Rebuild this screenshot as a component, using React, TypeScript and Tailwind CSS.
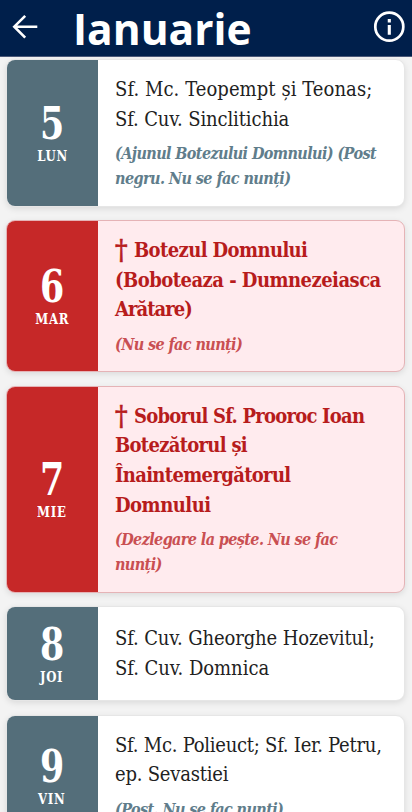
import React from "react";
import clsx from "clsx";

interface Line {
  text: string;
  // tracking keeps each line at its intended measure
  tracking: string;
  cross?: boolean;
}

interface Day {
  day: number;
  weekday: string;
  feast?: boolean;
  saints: Line[];
  notes: Line[];
}

const days: Day[] = [
  {
    day: 5,
    weekday: "LUN",
    saints: [
      { text: "Sf. Mc. Teopempt și Teonas;", tracking: "tracking-[0.07px]" },
      { text: "Sf. Cuv. Sinclitichia", tracking: "tracking-[-0.12px]" },
    ],
    notes: [
      { text: "(Ajunul Botezului Domnului) (Post", tracking: "tracking-[-0.6px]" },
      { text: "negru. Nu se fac nunți)", tracking: "tracking-[-0.56px]" },
    ],
  },
  {
    day: 6,
    weekday: "MAR",
    feast: true,
    saints: [
      { text: "Botezul Domnului", tracking: "tracking-[-0.6px]", cross: true },
      { text: "(Boboteaza - Dumnezeiasca", tracking: "tracking-[-0.52px]" },
      { text: "Arătare)", tracking: "tracking-[-0.95px]" },
    ],
    notes: [{ text: "(Nu se fac nunți)", tracking: "tracking-[-0.6px]" }],
  },
  {
    day: 7,
    weekday: "MIE",
    feast: true,
    saints: [
      { text: "Soborul Sf. Prooroc Ioan", tracking: "tracking-[-0.77px]", cross: true },
      { text: "Botezătorul și", tracking: "tracking-[-0.7px]" },
      { text: "Înaintemergătorul", tracking: "tracking-[-0.66px]" },
      { text: "Domnului", tracking: "tracking-[-0.5px]" },
    ],
    notes: [
      { text: "(Dezlegare la pește. Nu se fac", tracking: "tracking-[-0.6px]" },
      { text: "nunți)", tracking: "tracking-[-0.6px]" },
    ],
  },
  {
    day: 8,
    weekday: "JOI",
    saints: [
      { text: "Sf. Cuv. Gheorghe Hozevitul;", tracking: "tracking-[-0.12px]" },
      { text: "Sf. Cuv. Domnica", tracking: "tracking-[-0.04px]" },
    ],
    notes: [],
  },
  {
    day: 9,
    weekday: "VIN",
    saints: [
      { text: "Sf. Mc. Polieuct; Sf. Ier. Petru,", tracking: "tracking-[-0.25px]" },
      { text: "ep. Sevastiei", tracking: "tracking-[-0.22px]" },
    ],
    notes: [{ text: "(Post. Nu se fac nunți)", tracking: "tracking-[-0.6px]" }],
  },
];

const DayCard: React.FC<{ item: Day }> = ({ item }) => {
  const { feast } = item;

  return (
    <article
      className={clsx(
        "flex min-h-[95px] shrink-0 overflow-hidden rounded-[9px] border shadow-[0_2px_6px_rgba(0,0,0,0.10)]",
        feast ? "border-[#e5b3b6] bg-[#ffebee]" : "border-[#e6e6e6] bg-white"
      )}
    >
      <div
        className={clsx(
          "-my-px -ml-px flex w-[92px] shrink-0 flex-col items-center justify-center pt-[3px] text-white",
          feast ? "bg-[#c62828]" : "bg-[#546e7a]"
        )}
      >
        <span className="scale-x-[0.86] text-[45px] leading-[43px] font-bold">{item.day}</span>
        <span className="scale-x-[0.93] text-[14px] leading-[22px] font-bold tracking-[0.8px]">{item.weekday}</span>
      </div>

      <div className="flex min-w-0 flex-1 flex-col justify-center px-[17px] py-[14.75px]">
        <h2
          className={clsx(
            "text-[20px] leading-[29.75px] whitespace-nowrap",
            feast ? "font-bold text-[#b71c1c]" : "text-[#212121]"
          )}
        >
          {item.saints.map((line) => (
            <span key={line.text} className={clsx("block", line.tracking)}>
              {line.cross && (
                <span className="relative top-[3px] inline-block w-[19px] text-[28px] leading-[0] font-normal tracking-normal [-webkit-text-stroke:0.6px_currentColor]">
                  †
                </span>
              )}
              {line.text}
            </span>
          ))}
        </h2>
        {item.notes.length > 0 && (
          <p
            className={clsx(
              "mt-[6.5px] text-[16px] leading-[25px] font-bold whitespace-nowrap italic",
              feast ? "text-[#c94f52]" : "text-[#607d8b]"
            )}
          >
            {item.notes.map((line) => (
              <span key={line.text} className={clsx("block", line.tracking)}>{line.text}</span>
            ))}
          </p>
        )}
      </div>
    </article>
  );
};

export default function App() {
  return (
    <div className="flex h-[812px] w-[412px] flex-col overflow-hidden bg-[#f3f3f3] font-['DejaVu_Serif_Condensed','DejaVu_Serif',serif] [font-stretch:condensed]">
      <header className="flex h-[57px] shrink-0 items-center border-b border-[#4a5878] bg-[#001f4b] pr-[7px] pl-[12px] text-white">
        <svg className="overflow-visible" width="26" height="26" viewBox="0 0 26 26" fill="none" stroke="currentColor" strokeWidth="2.6">
          <path d="M25.3 11.7H2.5M13.2 0.8L2.3 11.7L13.2 22.6" />
        </svg>
        <h1 className="mt-[1px] ml-[35px] flex-1 font-['Open_Sans',sans-serif] text-[42.5px] leading-[56px] font-bold [font-stretch:normal]">
          Ianuarie
        </h1>
        <svg className="overflow-visible" width="32" height="32" viewBox="0 0 32 32" fill="none" stroke="currentColor">
          <circle cx="16.3" cy="14.7" r="14" strokeWidth="2.7" />
          <path d="M16.3 13V22.7M16.3 7V10.5" strokeWidth="3.1" />
        </svg>
      </header>

      <main className="flex min-h-0 flex-1 flex-col gap-[13.5px] overflow-hidden pt-[2px] pr-[7px] pl-[6px]">
        {days.map((item) => (
          <DayCard key={item.day} item={item} />
        ))}
      </main>
    </div>
  );
}
